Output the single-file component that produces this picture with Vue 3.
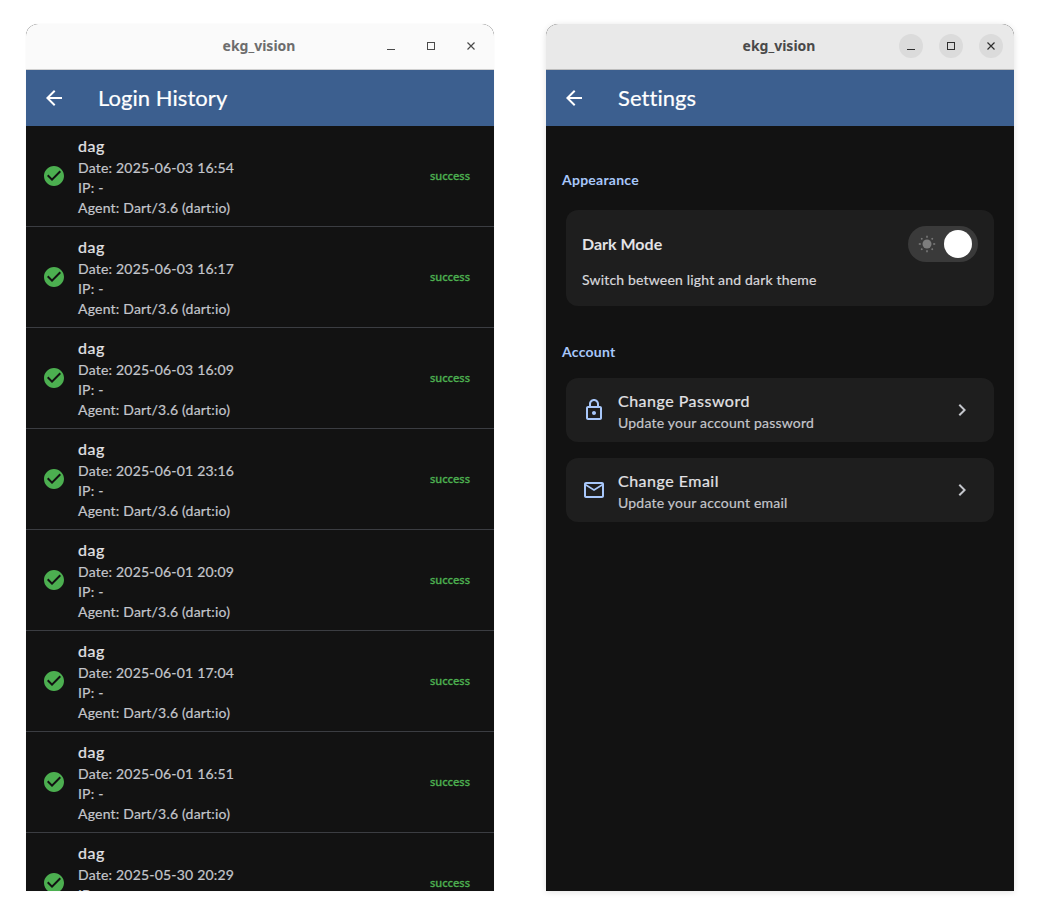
<template>
  <div class="desktop">
    <section class="window">
      <header class="titlebar">
        <span class="win-title">ekg_vision</span>
        <div class="win-controls">
          <button v-for="c in controls" :key="c" class="win-btn">
            <svg width="16" height="16" viewBox="0 0 16 16" fill="none" stroke="#4a4a4a" stroke-width="1">
              <path v-if="c === 'min'" d="M4 11.5h8" />
              <rect v-else-if="c === 'max'" x="4.5" y="4.5" width="7" height="7" />
              <path v-else d="M4.5 4.5l7 7M11.5 4.5l-7 7" stroke-width="1.2" />
            </svg>
          </button>
        </div>
      </header>
      <div class="appbar">
        <svg class="back" width="24" height="24" viewBox="0 0 24 24" fill="#fff">
          <path d="M20 11H7.83l5.59-5.59L12 4l-8 8 8 8 1.41-1.41L7.83 13H20v-2z" />
        </svg>
        <h1>Login History</h1>
      </div>
      <div class="history">
        <div v-for="(d, i) in logins" :key="i" class="login-row">
          <svg class="check" width="24" height="24" viewBox="0 0 24 24" fill="#4caf50">
            <path d="M12 2C6.48 2 2 6.48 2 12s4.48 10 10 10 10-4.48 10-10S17.52 2 12 2zm-2 15l-5-5 1.41-1.41L10 14.17l7.59-7.59L19 8l-9 9z" />
          </svg>
          <div class="login-text">
            <div class="login-user">dag</div>
            <div>Date: {{ d }}</div>
            <div>IP: -</div>
            <div>Agent: Dart/3.6 (dart:io)</div>
          </div>
          <span class="status">success</span>
        </div>
      </div>
    </section>

    <section class="window active">
      <header class="titlebar focused">
        <span class="win-title">ekg_vision</span>
        <div class="win-controls">
          <button v-for="c in controls" :key="c" class="win-btn">
            <svg width="16" height="16" viewBox="0 0 16 16" fill="none" stroke="#2e2e2e" stroke-width="1">
              <path v-if="c === 'min'" d="M4 11.5h8" />
              <rect v-else-if="c === 'max'" x="4.5" y="4.5" width="7" height="7" />
              <path v-else d="M4.5 4.5l7 7M11.5 4.5l-7 7" stroke-width="1.2" />
            </svg>
          </button>
        </div>
      </header>
      <div class="appbar">
        <svg class="back" width="24" height="24" viewBox="0 0 24 24" fill="#fff">
          <path d="M20 11H7.83l5.59-5.59L12 4l-8 8 8 8 1.41-1.41L7.83 13H20v-2z" />
        </svg>
        <h1>Settings</h1>
      </div>
      <div class="settings">
        <h2 class="first">Appearance</h2>
        <div class="card dark-card">
          <div class="dark-top">
            <span class="dark-label">Dark Mode</span>
            <div class="switch">
              <svg width="18" height="18" viewBox="0 0 18 18" class="sun">
                <circle cx="9" cy="9" r="4.5" fill="#7d7d7d" />
                <path d="M9 .8v2M9 15.2v2M.8 9h2M15.2 9h2M3.2 3.2l1.2 1.2M13.6 13.6l1.2 1.2M14.8 3.2l-1.2 1.2M3.2 14.8l1.2-1.2" stroke="#7d7d7d" stroke-width="1.5" />
              </svg>
              <span class="knob"></span>
            </div>
          </div>
          <div class="dark-sub">Switch between light and dark theme</div>
        </div>

        <h2>Account</h2>
        <div class="card action">
          <svg width="24" height="24" viewBox="0 0 24 24" fill="#a8c7fa">
            <path d="M18 8h-1V6c0-2.76-2.24-5-5-5S7 3.24 7 6v2H6c-1.1 0-2 .9-2 2v10c0 1.1.9 2 2 2h12c1.1 0 2-.9 2-2V10c0-1.1-.9-2-2-2zM9 6c0-1.66 1.34-3 3-3s3 1.34 3 3v2H9V6zm9 14H6V10h12v10zm-6-3c1.1 0 2-.9 2-2s-.9-2-2-2-2 .9-2 2 .9 2 2 2z" />
          </svg>
          <div class="action-text">
            <div class="action-title">Change Password</div>
            <div class="action-sub">Update your account password</div>
          </div>
          <svg width="24" height="24" viewBox="0 0 24 24" fill="#c4c6cc">
            <path d="M10 6L8.59 7.41 13.17 12l-4.58 4.59L10 18l6-6z" />
          </svg>
        </div>
        <div class="card action">
          <svg width="24" height="24" viewBox="0 0 24 24" fill="#a8c7fa">
            <path d="M22 6c0-1.1-.9-2-2-2H4c-1.1 0-2 .9-2 2v12c0 1.1.9 2 2 2h16c1.1 0 2-.9 2-2V6zm-2 0l-8 5-8-5h16zm0 12H4V8l8 5 8-5v10z" />
          </svg>
          <div class="action-text">
            <div class="action-title">Change Email</div>
            <div class="action-sub">Update your account email</div>
          </div>
          <svg width="24" height="24" viewBox="0 0 24 24" fill="#c4c6cc">
            <path d="M10 6L8.59 7.41 13.17 12l-4.58 4.59L10 18l6-6z" />
          </svg>
        </div>
      </div>
    </section>
  </div>
</template>

<script setup>
const controls = ['min', 'max', 'close']

const logins = [
  '2025-06-03 16:54',
  '2025-06-03 16:17',
  '2025-06-03 16:09',
  '2025-06-01 23:16',
  '2025-06-01 20:09',
  '2025-06-01 17:04',
  '2025-06-01 16:51',
  '2025-05-30 20:29'
]
</script>

<style>
html, body {
  margin: 0;
  background: #fff;
}
</style>

<style scoped>
.desktop {
  width: 1040px;
  height: 920px;
  box-sizing: border-box;
  padding: 24px 26px 29px;
  display: flex;
  gap: 52px;
  overflow: hidden;
  font-family: Lato, "Liberation Sans", sans-serif;
}
.window {
  width: 468px;
  height: 867px;
  display: flex;
  flex-direction: column;
  background: #121212;
  border-radius: 12px 12px 0 0;
  overflow: hidden;
  box-shadow: 0 0 2px rgba(0, 0, 0, 0.06);
}
.window.active {
  box-shadow: 0 1px 6px rgba(0, 0, 0, 0.12);
}
.titlebar {
  height: 45px;
  flex: none;
  position: relative;
  display: flex;
  align-items: center;
  justify-content: center;
  background: #fafafa;
  border-bottom: 1px solid #d0d0d0;
}
.titlebar.focused {
  background: #e9e9e9;
  border-bottom-color: #bdbdbd;
}
.win-title {
  margin: 0 2px 2px 0;
  font-family: "Noto Sans", sans-serif;
  font-size: 14px;
  font-weight: 700;
  color: #6d6d6d;
}
.focused .win-title {
  color: #4a4a4a;
}
.win-controls {
  position: absolute;
  right: 11px;
  top: 10px;
  display: flex;
  gap: 16px;
}
.win-btn {
  width: 24px;
  height: 24px;
  padding: 0;
  border: 0;
  border-radius: 50%;
  background: transparent;
  display: flex;
  align-items: center;
  justify-content: center;
}
.focused .win-btn {
  background: #dbdbdb;
}
.appbar {
  height: 56px;
  flex: none;
  display: flex;
  align-items: center;
  padding-left: 16px;
  background: #3c5f8f;
}
.appbar h1 {
  margin: 0 0 2px 32px;
  font-size: 22px;
  font-weight: 400;
  letter-spacing: 0.05px;
  -webkit-text-stroke: 0.2px currentColor;
  color: #fff;
}
.history {
  flex: 1;
  overflow: hidden;
}
.login-row {
  height: 101px;
  box-sizing: border-box;
  display: flex;
  align-items: center;
  padding: 0 24px 1px 16px;
  border-bottom: 1px solid #3b3d42;
}
.check {
  flex: none;
}
.login-text {
  flex: 1;
  margin-left: 12px;
  font-size: 14px;
  line-height: 20px;
  letter-spacing: 0.2px;
  -webkit-text-stroke: 0.2px currentColor;
  color: #c4c6cc;
}
.login-user {
  font-size: 16px;
  line-height: 24px;
  letter-spacing: 0.5px;
  color: #e3e3e6;
}
.status {
  font-family: "Noto Sans", sans-serif;
  font-size: 11px;
  font-weight: 500;
  -webkit-text-stroke: 0.3px currentColor;
  color: #4caf50;
}
.settings {
  flex: 1;
  padding: 0 20px;
}
.settings h2 {
  margin: 37px 0 17px -4px;
  font-size: 14px;
  line-height: 18px;
  font-weight: 700;
  letter-spacing: 0.25px;
  color: #a8c7fa;
}
.settings h2.first {
  margin: 45px 0 21px -4px;
}
.card {
  background: #1e1e1e;
  border-radius: 12px;
}
.dark-card {
  height: 96px;
  box-sizing: border-box;
  padding: 16px;
  margin-bottom: 37px;
}
.dark-top {
  display: flex;
  align-items: center;
  justify-content: space-between;
  height: 36px;
}
.dark-label {
  margin-bottom: 2px;
  font-size: 16px;
  font-weight: 700;
  color: #e3e3e6;
}
.dark-sub {
  margin-top: 8px;
  font-size: 14px;
  line-height: 20px;
  letter-spacing: 0.18px;
  -webkit-text-stroke: 0.2px currentColor;
  color: #d8d8dc;
}
.switch {
  width: 70px;
  height: 36px;
  box-sizing: border-box;
  padding: 0 6px 0 10px;
  border-radius: 18px;
  background: #3a3a3a;
  display: flex;
  align-items: center;
  justify-content: space-between;
}
.knob {
  width: 28px;
  height: 28px;
  border-radius: 50%;
  background: #fff;
}
.action {
  height: 64px;
  box-sizing: border-box;
  padding: 2px 20px 0 16px;
  margin-bottom: 16px;
  display: flex;
  align-items: center;
}
.action svg {
  margin-top: -2px;
}
.action-text {
  flex: 1;
  margin-left: 12px;
  -webkit-text-stroke: 0.2px currentColor;
}
.action-title {
  font-size: 16px;
  line-height: 24px;
  letter-spacing: 0.5px;
  color: #e3e3e6;
}
.action-sub {
  font-size: 14px;
  line-height: 20px;
  letter-spacing: 0.22px;
  color: #c4c6cc;
}
</style>
